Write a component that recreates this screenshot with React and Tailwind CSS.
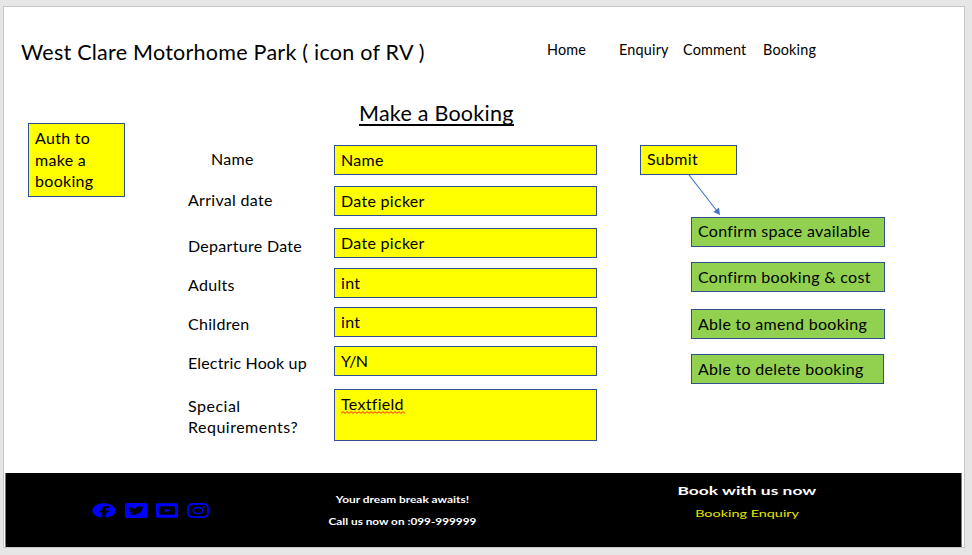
import React from "react";
import { FaFacebook, FaTwitterSquare } from "react-icons/fa";

const NAV = [
  { label: "Home", box: "w-[72px]" },
  { label: "Enquiry", box: "w-[64px]" },
  { label: "Comment", box: "w-[80px]" },
  { label: "Booking", box: "w-[60px]" },
];

const FIELDS = [
  { label: "Name", value: "Name", row: "", labelBox: "pl-[23px] pt-[3px]", box: "h-[30px] pt-[3px]" },
  { label: "Arrival date", value: "Date picker", row: "mt-[11px]", labelBox: "pt-[3px]", box: "h-[30px] pt-[3px]" },
  { label: "Departure Date", value: "Date picker", row: "mt-[12px]", labelBox: "pt-[7px]", box: "h-[30px] pt-[3px]" },
  { label: "Adults", value: "int", row: "mt-[10px]", labelBox: "pt-[6px]", box: "h-[30px] pt-[3px]" },
  { label: "Children", value: "int", row: "mt-[9px]", labelBox: "pt-[6px]", box: "h-[30px] pt-[3px]" },
  { label: "Electric Hook up", value: "Y/N", row: "mt-[9px]", labelBox: "pt-[6px] tracking-[0.15px]", box: "h-[30px] pt-[3px] tracking-[-0.6px]" },
  { label: "Special Requirements?", value: "Textfield", row: "mt-[13px]", labelBox: "pt-[6px] tracking-[0.5px]", box: "h-[52px] pt-[3px]", misspelt: true },
];

const ACTIONS = [
  { label: "Confirm space available", box: "w-[194px] pt-[2px]" },
  { label: "Confirm booking & cost", box: "mt-[15px] w-[194px] pt-[3px]" },
  { label: "Able to amend booking", box: "mt-[17px] w-[194px] pt-[3px]" },
  { label: "Able to delete booking", box: "mt-[15px] w-[193px] pt-[3px]" },
];

function Squiggle() {
  const points = Array.from({ length: 33 }, (_, i) => `${i * 2},${i % 2 ? 0.7 : 2.3}`).join(" ");
  return (
    <svg className="absolute left-0 top-[18px] h-[3px] w-[64px]" viewBox="0 0 64 3">
      <polyline points={points} fill="none" stroke="#ff2a00" strokeWidth="1" />
    </svg>
  );
}

function VideoIcon() {
  return (
    <svg className="h-[15px] w-[22px]" viewBox="0 0 22 15" fill="currentColor">
      <path
        fillRule="evenodd"
        d="M1.5 0.3H20.5Q22 0.3 22 1.5V13.5Q22 14.7 20.5 14.7H1.5Q0 14.7 0 13.5V1.5Q0 0.3 1.5 0.3ZM5 3.2Q2.8 3.2 2.8 5.2V9.8Q2.8 11.8 5 11.8H17Q19.2 11.8 19.2 9.8V5.2Q19.2 3.2 17 3.2Z"
      />
      <path d="M8.8 5.4L14.2 7.5L8.8 9.6Z" />
    </svg>
  );
}

function CameraIcon() {
  return (
    <svg className="h-[15px] w-[22px]" viewBox="0 0 22 15" fill="none" stroke="currentColor">
      <rect x="1" y="0.9" width="20" height="13.2" rx="5" ry="3.6" strokeWidth="1.7" />
      <ellipse cx="11" cy="7.5" rx="4.8" ry="3.1" strokeWidth="1.5" />
      <ellipse cx="16.6" cy="3.7" rx="1.2" ry="0.8" fill="currentColor" stroke="none" />
    </svg>
  );
}

function Header() {
  return (
    <header className="flex h-[92px] items-start pl-[17px]">
      <h1 className="w-[526px] whitespace-nowrap pt-[32px] text-[21.5px] leading-[27px] tracking-[0.25px]">West Clare Motorhome Park ( icon of RV )</h1>
      <nav className="flex pt-[34px] text-[14.4px] leading-[18px] tracking-[0.2px]">
        {NAV.map((n) => (
          <a key={n.label} className={n.box}>{n.label}</a>
        ))}
      </nav>
    </header>
  );
}

function BookingForm() {
  return (
    <section className="ml-[63px] w-[409px]">
      <h2 className="h-[46px] pl-[171px] text-[21.5px] leading-[27px] tracking-[0.25px] whitespace-nowrap">
        <span className="inline-block h-[27px] border-b-2 border-black leading-[29px]">Make a Booking</span>
      </h2>
      {FIELDS.map((f, i) => (
        <div key={i} className={`flex items-start ${f.row}`}>
          <label className={`w-[146px] pr-[10px] leading-[21px] ${f.labelBox}`}>{f.label}</label>
          <div className={`w-[263px] border border-[#2f528f] bg-[#ffff00] pl-[6px] ${f.box}`}>
            <span className="relative block">
              {f.value}
              {f.misspelt && <Squiggle />}
            </span>
          </div>
        </div>
      ))}
    </section>
  );
}

function Actions() {
  return (
    <section className="ml-[43px] w-[250px] pt-[46px] whitespace-nowrap">
      <div className="h-[30px] w-[97px] border border-[#2f528f] bg-[#ffff00] pl-[6px] pt-[2px]">Submit</div>
      <svg className="ml-[45px] block h-[42px] w-[40px]" viewBox="0 0 40 42">
        <path d="M4 0L32 36" stroke="#4472c4" strokeWidth="1.1" fill="none" />
        <path d="M35 40L28.4 37L34 32.6Z" fill="#4472c4" />
      </svg>
      <div className="pl-[51px]">
        {ACTIONS.map((a) => (
          <div key={a.label} className={`h-[30px] border border-[#2f528f] bg-[#92d050] pl-[6px] ${a.box}`}>{a.label}</div>
        ))}
      </div>
    </section>
  );
}

function Footer() {
  return (
    <footer className="ml-px flex h-[74px] w-[957px] items-start border-l border-r border-[#777] bg-black tracking-normal text-white">
      <div className="ml-[86px] flex gap-[9px] pt-[30px] text-[#0000ff]">
        <FaFacebook className="h-[15px] w-[24px]" preserveAspectRatio="none" />
        <FaTwitterSquare className="h-[15px] w-[22px]" viewBox="0 32 448 448" preserveAspectRatio="none" />
        <VideoIcon />
        <CameraIcon />
      </div>
      <div className="ml-[91px] flex w-[204px] flex-col items-center pt-[20px] text-[9px] font-bold leading-[14px] whitespace-nowrap">
        <p className="origin-center scale-x-[1.32]">Your dream break awaits!</p>
        <p className="mt-[8px] origin-center scale-x-[1.31]">Call us now on :099-999999</p>
      </div>
      <div className="ml-[143px] flex w-[200px] flex-col items-center pt-[10px] whitespace-nowrap">
        <p className="origin-center scale-x-[1.45] text-[12px] font-bold leading-[16px]">Book with us now</p>
        <p className="mt-[7px] origin-center scale-x-[1.44] text-[10px] leading-[14px] text-[#e6e600]">Booking Enquiry</p>
      </div>
    </footer>
  );
}

export default function App() {
  return (
    <div className="h-[555px] w-[972px] overflow-hidden bg-[#e6e6e6] pl-[3px] pt-[6px] font-['Lato',sans-serif] text-[16px] leading-[21.5px] tracking-[0.3px] text-black">
      <main className="flex h-[542px] w-[962px] flex-col border border-[#c6c6c6] bg-white">
        <Header />
        <div className="flex h-[374px] items-start">
          <aside className="ml-[24px] mt-[24px] h-[74px] w-[97px] border border-[#2f528f] bg-[#ffff00] pl-[6px] pr-[14px] pt-[3px]">
            Auth to make a booking
          </aside>
          <BookingForm />
          <Actions />
        </div>
        <Footer />
      </main>
    </div>
  );
}
